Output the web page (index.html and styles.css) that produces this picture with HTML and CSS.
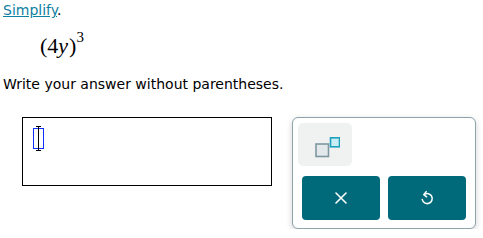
FILE: index.html
```html
<!DOCTYPE html>
<html>
<head>
<meta charset="utf-8">
<link rel="stylesheet" href="styles.css">
</head>
<body>
<div class="page">
  <p class="prompt"><a class="link" href="#">Simplify</a>.</p>
  <div class="math"><span class="paren">(</span>4<i>y</i><span class="paren">)</span><sup>3</sup></div>
  <p class="instr">Write your answer without parentheses.</p>
  <div class="answer-row">
    <div class="input">
      <div class="cursor"><span class="beam"></span></div>
    </div>
    <div class="keypad">
      <button class="sup-btn" aria-label="superscript">
        <svg width="26" height="22" viewBox="0 0 26 22">
          <rect x="2" y="8" width="12.5" height="12.5" fill="#e3e8ea" stroke="#7f97a0" stroke-width="1.6"/>
          <rect x="16.5" y="1.8" width="9" height="9" fill="#c8eef5" stroke="#1ea0bd" stroke-width="1.6"/>
        </svg>
      </button>
      <div class="actions">
        <button class="act" aria-label="clear">
          <svg width="12" height="12" viewBox="0 0 12 12"><path d="M1 1L11 11M11 1L1 11" stroke="#fff" stroke-width="1.6" stroke-linecap="round"/></svg>
        </button>
        <button class="act" aria-label="undo">
          <svg width="14" height="16" viewBox="0 0 14 16"><path d="M4.2 4.6A5 5 0 1 1 2.3 9.6" fill="none" stroke="#fff" stroke-width="1.5" stroke-linecap="round"/><path d="M6.2 1.6L3.8 4.6L6.6 6.8" fill="none" stroke="#fff" stroke-width="1.5" stroke-linecap="round" stroke-linejoin="round"/></svg>
        </button>
      </div>
    </div>
  </div>
</div>
</body>
</html>
```

FILE: styles.css
```css
*, *::before, *::after {
  box-sizing: border-box;
}
html, body {
  margin: 0;
  padding: 0;
  background: #fff;
}
.page {
  padding: 0 3px;
  font-family: "DejaVu Sans", Verdana, sans-serif;
  font-size: 14px;
  color: #000;
}
.prompt {
  margin: 0;
  padding-top: 2px;
  line-height: 17px;
}
.link {
  color: #0f7fa2;
  text-decoration: underline;
}
.math {
  margin-left: 37px;
  margin-top: 14px;
  font-family: "Liberation Serif", "Times New Roman", serif;
  font-size: 22px;
  line-height: 26px;
  height: 26px;
}
.math i {
  font-style: italic;
  padding-right: 1px;
}
.math sup {
  font-size: 15px;
  vertical-align: 11px;
  line-height: 0;
}
.instr {
  margin: 0;
  margin-top: 17px;
  line-height: 17px;
}
.answer-row {
  display: flex;
  align-items: flex-start;
  margin-top: 24px;
  margin-left: 19px;
  gap: 20px;
}
.input {
  flex: none;
  width: 250px;
  height: 69px;
  border: 1px solid #000;
  position: relative;
}
.cursor {
  position: absolute;
  left: 10px;
  top: 10px;
  width: 11px;
  height: 21px;
  border: 1px solid #1030ff;
}
.beam {
  position: absolute;
  left: 4px;
  top: -3px;
  width: 1px;
  height: 25px;
  background: #000;
}
.beam::before, .beam::after {
  content: "";
  position: absolute;
  left: -2px;
  width: 5px;
  height: 1px;
  background: #000;
}
.beam::before { top: 0; }
.beam::after { bottom: 0; }
.keypad {
  flex: none;
  width: 184px;
  height: 112px;
  border: 1px solid #8ea3ab;
  border-radius: 6px;
  padding: 5px 9px 8px 5px;
  box-shadow: 0 2px 6px rgba(0, 0, 0, 0.18);
  background: #fff;
}
.sup-btn {
  display: flex;
  align-items: center;
  justify-content: center;
  width: 54px;
  height: 43px;
  border: none;
  border-radius: 5px;
  background: #f0f2f2;
  padding: 4px 0 0 4px;
  margin: 0;
}
.actions {
  display: flex;
  gap: 8px;
  margin-top: 10px;
  margin-left: 4px;
}
.act {
  display: flex;
  align-items: center;
  justify-content: center;
  width: 78px;
  height: 44px;
  border: none;
  border-radius: 4px;
  background: #006a7a;
  padding: 0;
  margin: 0;
}
```
